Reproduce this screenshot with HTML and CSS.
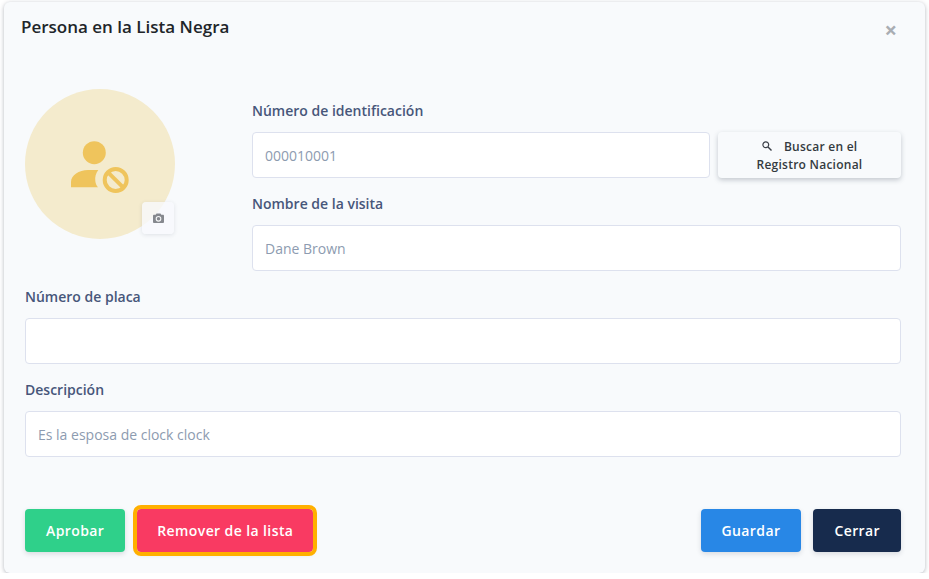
FILE: index.html
```html
<!DOCTYPE html>
<html lang="es">
<head>
  <meta charset="UTF-8" />
  <title>Persona en la Lista Negra</title>
  <link rel="stylesheet" href="styles.css">
</head>
<body>
  <div class="modal">
    <!-- Header -->
    <div class="modal-header">
      <h2 class="modal-title">Persona en la Lista Negra</h2>
      <span class="modal-close">&times;</span>
    </div>

    <!-- Photo and main fields -->
    <div class="top-row">
      <div class="avatar">
        <svg class="avatar-icon" width="60" height="54" viewBox="0 0 60 54">
          <circle cx="23.300" cy="11.700" r="11.500" fill="#efc45c"/>
          <path d="M0 46.300V41C0 34 8 29 17 29H27.300C24.800 32 23.800 36 24.300 40C24.600 42.500 25.500 44.700 27 46.300Z" fill="#efc45c"/>
          <circle cx="44.700" cy="39" r="11" fill="none" stroke="#efc45c" stroke-width="4"/>
          <path d="M37 31.300L52.400 46.700" stroke="#efc45c" stroke-width="4"/>
        </svg>
        <div class="camera-btn">
          <svg width="11" height="10" viewBox="0 0 11 10">
            <path d="M3.500 0.500H7.500L8.300 1.800H10C10.500 1.800 11 2.300 11 2.800V9C11 9.500 10.500 10 10 10H1C0.500 10 0 9.500 0 9V2.800C0 2.300 0.500 1.800 1 1.800H2.700Z" fill="#85888e"/>
            <circle cx="5.500" cy="5.800" r="2.300" fill="none" stroke="#f4f5f6" stroke-width="1.100"/>
          </svg>
        </div>
      </div>

      <div class="top-fields">
        <div class="field">
          <label class="field-label">Número de identificación</label>
          <div class="id-row">
            <input class="field-input" type="text" value="000010001">
            <button class="search-btn">
              <svg class="search-icon" width="10" height="10" viewBox="0 0 10 10">
                <circle cx="3.800" cy="3.800" r="2.900" fill="none" stroke="#3a3f47" stroke-width="1.200"/>
                <path d="M6 6L9.500 9.500" stroke="#3a3f47" stroke-width="1.400"/>
              </svg>
              Buscar en el<br>Registro Nacional
            </button>
          </div>
        </div>
        <div class="field">
          <label class="field-label">Nombre de la visita</label>
          <input class="field-input" type="text" value="Dane Brown">
        </div>
      </div>
    </div>

    <div class="field">
      <label class="field-label">Número de placa</label>
      <input class="field-input" type="text" value="">
    </div>
    <div class="field">
      <label class="field-label">Descripción</label>
      <input class="field-input" type="text" value="Es la esposa de clock clock">
    </div>

    <!-- Footer buttons -->
    <div class="modal-footer">
      <div class="footer-group">
        <button class="btn btn-green">Aprobar</button>
        <button class="btn btn-red">Remover de la lista</button>
      </div>
      <div class="footer-group">
        <button class="btn btn-blue">Guardar</button>
        <button class="btn btn-navy">Cerrar</button>
      </div>
    </div>
  </div>
</body>
</html>
```

FILE: styles.css
```css
body, html {
  margin: 0;
  padding: 0;
  background-color: #ffffff;
  font-family: "Open Sans", sans-serif;
}

body {
  padding: 2px 4px 0;
}

.modal {
  box-sizing: border-box;
  height: 571px;
  padding: 0 24px 0 21px;
  background-color: #f8fafc;
  border-radius: 6px;
  box-shadow: 0 1px 4px rgba(40, 50, 70, 0.35);
}

/* Header */
.modal-header {
  display: flex;
  justify-content: space-between;
  height: 87px;
  margin-left: -4px;
  padding-top: 14px;
  box-sizing: border-box;
}

.modal-title {
  margin: 0;
  font-size: 17px;
  line-height: 22px;
  font-weight: 600;
  color: #212529;
}

.modal-close {
  margin: 2px 4px 0 0;
  font-size: 22px;
  line-height: 22px;
  font-weight: 700;
  color: #a9adb3;
}

/* Top section */
.top-row {
  display: flex;
  gap: 77px;
}

.avatar {
  position: relative;
  flex: none;
  display: flex;
  justify-content: center;
  align-items: center;
  width: 150px;
  height: 150px;
  border-radius: 50%;
  background-color: #f4ebcd;
}

.avatar-icon {
  margin: 8px 0 0 2px;
}

.camera-btn {
  position: absolute;
  left: 117px;
  top: 113px;
  display: flex;
  justify-content: center;
  align-items: center;
  width: 32px;
  height: 32px;
  border-radius: 4px;
  background-color: rgba(248, 249, 252, 0.8);
  box-shadow: 0 1px 4px rgba(40, 50, 70, 0.12);
}

.top-fields {
  flex: 1;
}

.field-label {
  display: block;
  height: 22px;
  margin: 15px 0 10px;
  font-size: 14px;
  line-height: 22px;
  font-weight: 600;
  color: #47567a;
}

.top-fields .field:first-child .field-label {
  margin-top: 11px;
}

.field-input {
  display: block;
  box-sizing: border-box;
  width: 100%;
  height: 46px;
  padding: 0 12px;
  font-family: inherit;
  font-size: 14px;
  color: #8d9bb0;
  background-color: #ffffff;
  border: 1px solid #dde1ee;
  border-radius: 4px;
}

.id-row {
  display: flex;
  gap: 8px;
}

.id-row .field-input {
  flex: 1;
  min-width: 0;
}

.search-btn {
  flex: none;
  width: 183px;
  height: 46px;
  padding: 1px 0 0;
  font-family: inherit;
  font-size: 12px;
  line-height: 18px;
  font-weight: 600;
  letter-spacing: 0.25px;
  color: #343a40;
  background-color: #f8fafc;
  border: 0;
  border-radius: 4px;
  box-shadow: 0 2px 5px rgba(40, 50, 70, 0.25);
}

.search-icon {
  margin-right: 9px;
}

/* Footer */
.modal-footer {
  display: flex;
  justify-content: space-between;
  margin-top: 52px;
}

.footer-group {
  display: flex;
  gap: 12px;
}

.btn {
  height: 43px;
  padding: 0 21px;
  font-family: inherit;
  font-size: 14px;
  font-weight: 600;
  letter-spacing: 0.4px;
  color: #ffffff;
  border: 0;
  border-radius: 4px;
  box-shadow: 0 2px 5px rgba(40, 50, 70, 0.15);
}

.btn-green {
  background-color: #2fd08a;
}

.btn-red {
  padding: 0 20px;
  background-color: #f93a62;
  outline: 4px solid #ffb000;
}

.btn-blue {
  background-color: #2887e6;
}

.btn-navy {
  background-color: #172b4d;
}
```
